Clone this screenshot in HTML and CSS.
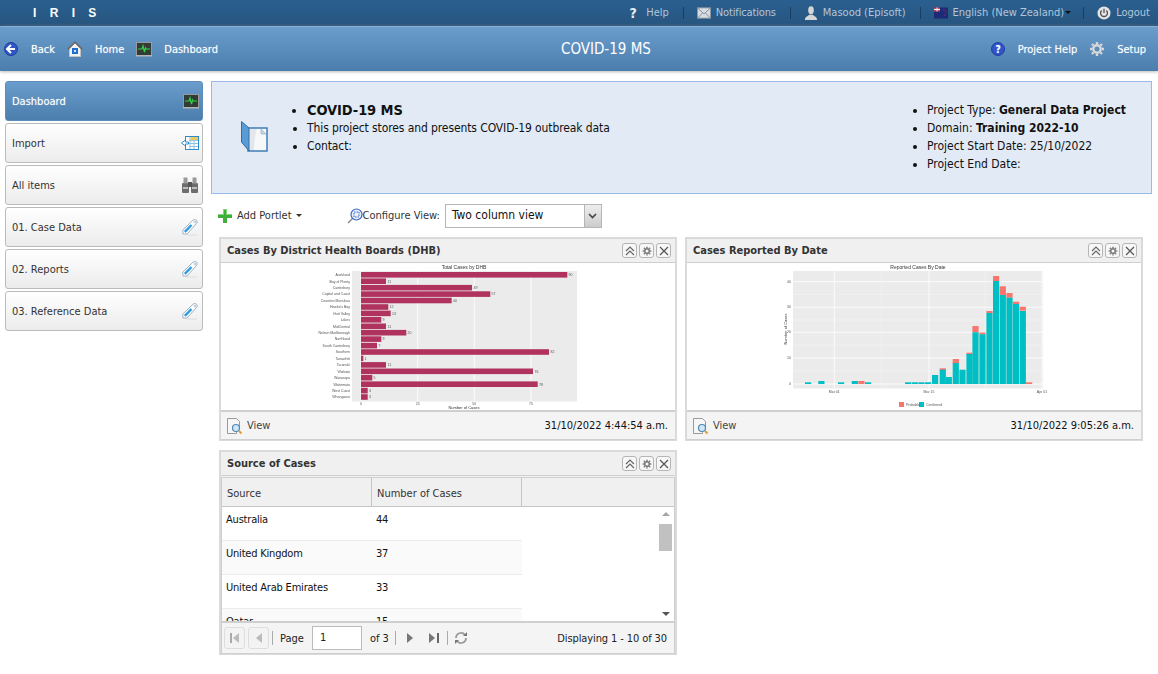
FILE: index.html
```html
<!DOCTYPE html>
<html lang="en">
<head>
<meta charset="UTF-8" />
<title>IRIS - COVID-19 MS</title>
<link rel="stylesheet" href="styles.css">
</head>
<body>

<svg class="sprites" width="0" height="0">
  <symbol id="i-pulse" viewBox="0 0 16 16">
    <rect x="0.5" y="1.5" width="15" height="13" fill="#333b35" stroke="#9a9a9a"/>
    <rect x="0" y="14" width="16" height="1.5" fill="#b5b5b5"/>
    <path d="M2 8h4l1-3 1.500 6 1-4 .5 1h4" fill="none" stroke="#2fd24a" stroke-width="1.200"/>
  </symbol>
  <symbol id="i-tag" viewBox="0 0 18 18">
    <path d="M2 16 1.800 12 12 2.200c1-.9 2.500-.9 3.500 0 .9 1 .9 2.400 0 3.300L6 16z" fill="#fff" stroke="#9fb2c2"/>
    <path d="M3.800 13.800 10.500 7" stroke="#2c9be0" stroke-width="2.400"/>
    <circle cx="14" cy="4" r="1" fill="#fff" stroke="#8fa6b8" stroke-width=".6"/>
    <path d="M6 17h10" stroke="#dcdcdc"/>
  </symbol>
  <symbol id="i-collapse" viewBox="0 0 10 10">
    <path d="M1 5 5 1l4 4M1 9l4-4 4 4" fill="none" stroke="#666" stroke-width="1.200"/>
  </symbol>
  <symbol id="i-gear" viewBox="0 0 16 16">
    <path d="M8 3v-2M8 15v-2M3 8h-2M15 8h-2M4.500 4.500 3 3M13 13l-1.500-1.500M4.500 11.500 3 13M13 3l-1.500 1.500" stroke="currentColor" stroke-width="2.400"/>
    <circle cx="8" cy="8" r="3.700" fill="none" stroke="currentColor" stroke-width="2.400"/>
  </symbol>
  <symbol id="i-close" viewBox="0 0 10 10">
    <path d="M1 1l8 8M9 1 1 9" stroke="#555" stroke-width="1.200"/>
  </symbol>
  <symbol id="i-view" viewBox="0 0 18 18">
    <path d="M1.500 1.500h9l3 3v8h-3v4h-9z" fill="#f6f6f6" stroke="#9a9a9a"/>
    <circle cx="10" cy="11" r="3.500" fill="#cfe6f6" stroke="#4f87b3" stroke-width="1.200"/>
    <path d="M13 14l2.500 2.500" stroke="#e0a030" stroke-width="2"/>
  </symbol>
</svg>

<header class="topbar">
  <div class="logo">I R I S</div>
  <nav class="topmenu">
    <a class="topitem">
      <span class="qmark">?</span>Help
    </a>
    <i class="sep"></i>
    <a class="topitem tight">
      <svg class="ico-tb" viewBox="0 0 15 12"><rect x=".5" y=".5" width="14" height="11" fill="#d9dde2" stroke="#8b98a5"/><path d="M.5.500 7.500 7l7-6.500M.5 11.500 6 6M14.500 11.500 9 6" fill="none" stroke="#7d8a97"/></svg>Notifications
    </a>
    <i class="sep"></i>
    <a class="topitem">
      <svg class="ico-tb" viewBox="0 0 15 15"><ellipse cx="7.500" cy="4.500" rx="3" ry="4.300" fill="#d6d6d6"/><path d="M1 15c0-3.500 3-3.500 4.500-5.500h4C11 11.500 14 11.500 14 15z" fill="#d6d6d6"/></svg>Masood (Episoft)
    </a>
    <i class="sep"></i>
    <a class="topitem">
      <svg class="ico-tb" viewBox="0 0 14 11"><rect width="14" height="11" fill="#1c2a78"/><rect width="6" height="4" fill="#b9495f"/><path d="M3 0v4M0 2h6" stroke="#eee" stroke-width="1"/><path d="M9.500 2h1v1h-1zM11.500 4h1v1h-1zM10.500 7h1v1h-1z" fill="#d33"/></svg>English (New Zealand)<b class="caret caret-dark"></b>
    </a>
    <i class="sep"></i>
    <a class="topitem">
      <svg class="ico-tb" viewBox="0 0 15 15"><circle cx="7.500" cy="7.500" r="7" fill="#e4e4e4"/><path d="M5 4.800a3.700 3.700 0 1 0 5 0" fill="none" stroke="#555" stroke-width="1.400"/><path d="M7.500 3v4.500" stroke="#555" stroke-width="1.400"/></svg>Logout
    </a>
  </nav>
</header>

<div class="navbar">
  <a class="navitem">
    <svg class="ico-back" viewBox="0 0 14 14"><circle cx="7" cy="7" r="6.500" fill="#2f55c8" stroke="#1f3f9e"/><path d="M7 3 3 7l4 4M3.500 7H11" fill="none" stroke="#fff" stroke-width="2"/></svg>Back
  </a>
  <a class="navitem">
    <svg class="ico-home" viewBox="0 0 16 16"><path d="M2.500 7v8.500h11V7L8 2z" fill="#f3f3f3" stroke="#c4c4c4"/><path d="M.7 8.300 8 1.200l7.300 7.100" fill="none" stroke="#6c6c6c" stroke-width="1.800"/><rect x="5" y="7" width="6" height="6" fill="#1f6fd0"/><rect x="7" y="9" width="2" height="2" fill="#cfe6ff"/></svg>Home
  </a>
  <a class="navitem">
    <svg class="ico-home"><use href="#i-pulse"/></svg>Dashboard
  </a>
  <div class="navtitle">COVID-19 MS</div>
  <div class="navright">
    <a class="navitem">
      <svg class="ico-help" viewBox="0 0 14 14"><circle cx="7" cy="7" r="6.500" fill="#2f55c8" stroke="#1f3f9e"/><text x="7" y="10.500" class="ico-q">?</text></svg>Project Help
    </a>
    <a class="navitem">
      <svg class="ico-setup"><use href="#i-gear"/></svg>Setup
    </a>
  </div>
</div>

<div class="page">
  <aside class="sidebar">
    <a class="sideitem active">Dashboard
      <svg class="ico-pulse"><use href="#i-pulse"/></svg>
    </a>
    <a class="sideitem">Import
      <svg class="ico-side" viewBox="0 0 18 18"><rect x="4.500" y="2.500" width="13" height="13" fill="#fff" stroke="#2c8ccb"/><path d="M8 6.500h9M8 9.500h9M8 12.500h9M9 3v12M13 3v12" stroke="#8fc4e6"/><rect x="9.500" y="3" width="7.500" height="3" fill="#f0c860"/><path d="M.5 9l4-3v2h3v2h-3v2z" fill="#fff" stroke="#2c8ccb"/></svg>
    </a>
    <a class="sideitem">All items
      <svg class="ico-side" viewBox="0 0 18 18"><rect x="1" y="7" width="7" height="10" rx="1" fill="#6d6d6d"/><rect x="10" y="7" width="7" height="10" rx="1" fill="#6d6d6d"/><rect x="2.500" y="1.500" width="4" height="6" fill="#9a9a9a"/><rect x="11.500" y="1.500" width="4" height="6" fill="#9a9a9a"/><rect x="7" y="6" width="4" height="5" fill="#555"/><rect x="2" y="11" width="5" height="2" fill="#bdbdbd"/><rect x="11" y="11" width="5" height="2" fill="#bdbdbd"/></svg>
    </a>
    <a class="sideitem">01. Case Data
      <svg class="ico-side"><use href="#i-tag"/></svg>
    </a>
    <a class="sideitem">02. Reports
      <svg class="ico-side"><use href="#i-tag"/></svg>
    </a>
    <a class="sideitem">03. Reference Data
      <svg class="ico-side"><use href="#i-tag"/></svg>
    </a>
  </aside>

  <main class="content">
    <section class="banner">
      <svg class="ico-book" viewBox="0 0 27 31">
        <rect x="7" y="7" width="19" height="23" fill="#f7f8fa" stroke="#3d7db5" stroke-width="1.500"/>
        <path d="M8 29V8h8c-2 6-3 14-3 21z" fill="#e3e6ea"/>
        <path d="M.5.500 8 7v23L.5 21z" fill="#5b9bd5" stroke="#2f6ea5"/>
        <path d="M20 8v5h5z" fill="#cdd6df" stroke="#9fb0bf" stroke-width=".7"/>
      </svg>
      <ul class="info info-main">
        <li class="info-title">COVID-19 MS</li>
        <li>This project stores and presents COVID-19 outbreak data</li>
        <li>Contact:</li>
      </ul>
      <ul class="info info-side">
        <li>Project Type: <b>General Data Project</b></li>
        <li>Domain: <b>Training 2022-10</b></li>
        <li>Project Start Date: 25/10/2022</li>
        <li>Project End Date:</li>
      </ul>
    </section>

    <div class="toolbar">
      <a class="addlink">
        <svg class="ico-plus" viewBox="0 0 14 14"><path d="M5 0h4v5h5v4H9v5H5V9H0V5h5z" fill="#3fae3a"/><path d="M5 0h4v5h5v1H8V1H6v5H0V5h5z" fill="#7fd873"/></svg>Add Portlet<b class="caret"></b>
      </a>
      <svg class="ico-config" viewBox="0 0 16 16"><path d="M1 15l5-5" stroke="#8a8a8a" stroke-width="1.500"/><circle cx="9.500" cy="6.500" r="5.500" fill="#e8f1fb" stroke="#3a62c4" stroke-width="1.200"/><rect x="7" y="4" width="5" height="5" fill="none" stroke="#3a62c4" stroke-dasharray="1.500 1"/></svg>
      <span class="configlabel">Configure View:</span>
      <div class="viewselect">
        <span class="viewvalue">Two column view</span>
        <span class="viewarrow"><svg viewBox="0 0 9 6" width="9" height="6"><path d="M1 1l3.500 3.500L8 1" fill="none" stroke="#444" stroke-width="1.600"/></svg></span>
      </div>
    </div>

    <div class="portlets">
      <section class="portlet">
        <div class="portlet-head">
          <h3>Cases By District Health Boards (DHB)</h3>
          <div class="tools">
            <span class="tool"><svg><use href="#i-collapse"/></svg></span>
            <span class="tool tool-gear"><svg><use href="#i-gear"/></svg></span>
            <span class="tool"><svg><use href="#i-close"/></svg></span>
          </div>
        </div>
        <div class="portlet-body chart-wrap">
          <svg class="chart" width="454" height="148" viewBox="221 263 454 148">
            <rect x="352" y="271" width="225" height="130.500" fill="#ebebeb"/>
            <path d="M361 271v130M417.700 271v130M474.300 271v130M531 271v130" stroke="#fff" stroke-width=".8"/>
            <g fill="#b0325e">
              <rect x="361" y="272" width="206.300" height="5.600"/>
              <rect x="361" y="278.400" width="25" height="5.600"/>
              <rect x="361" y="284.900" width="111" height="5.600"/>
              <rect x="361" y="291.300" width="129.300" height="5.600"/>
              <rect x="361" y="297.700" width="90.700" height="5.600"/>
              <rect x="361" y="304.200" width="27.300" height="5.600"/>
              <rect x="361" y="310.600" width="29.700" height="5.600"/>
              <rect x="361" y="317" width="20.300" height="5.600"/>
              <rect x="361" y="323.500" width="25" height="5.600"/>
              <rect x="361" y="329.900" width="45.300" height="5.600"/>
              <rect x="361" y="336.300" width="20.300" height="5.600"/>
              <rect x="361" y="342.800" width="16" height="5.600"/>
              <rect x="361" y="349.200" width="188" height="5.600"/>
              <rect x="361" y="355.600" width="2.300" height="5.600"/>
              <rect x="361" y="362.100" width="25" height="5.600"/>
              <rect x="361" y="368.500" width="172" height="5.600"/>
              <rect x="361" y="374.900" width="11.300" height="5.600"/>
              <rect x="361" y="381.400" width="176.700" height="5.600"/>
              <rect x="361" y="387.800" width="6.700" height="5.600"/>
              <rect x="361" y="394.200" width="6.700" height="5.600"/>
            </g>
            <g class="axis-y">
              <text x="350" y="276">Auckland</text>
              <text x="350" y="282.500">Bay of Plenty</text>
              <text x="350" y="289">Canterbury</text>
              <text x="350" y="295.400">Capital and Coast</text>
              <text x="350" y="301.800">Counties Manukau</text>
              <text x="350" y="308.300">Hawke's Bay</text>
              <text x="350" y="314.700">Hutt Valley</text>
              <text x="350" y="321.100">Lakes</text>
              <text x="350" y="327.600">MidCentral</text>
              <text x="350" y="334">Nelson Marlborough</text>
              <text x="350" y="340.400">Northland</text>
              <text x="350" y="346.900">South Canterbury</text>
              <text x="350" y="353.300">Southern</text>
              <text x="350" y="359.700">Tairawhiti</text>
              <text x="350" y="366.200">Taranaki</text>
              <text x="350" y="372.600">Waikato</text>
              <text x="350" y="379">Wairarapa</text>
              <text x="350" y="385.500">Waitemata</text>
              <text x="350" y="391.900">West Coast</text>
              <text x="350" y="398.300">Whanganui</text>
            </g>
            <g class="axis-val">
              <text x="568.500" y="276">90</text>
              <text x="387.500" y="282.500">11</text>
              <text x="473.500" y="289">49</text>
              <text x="491.500" y="295.400">57</text>
              <text x="453" y="301.800">40</text>
              <text x="389.500" y="308.300">12</text>
              <text x="392" y="314.700">13</text>
              <text x="382.500" y="321.100">9</text>
              <text x="387.500" y="327.600">11</text>
              <text x="407.500" y="334">20</text>
              <text x="382.500" y="340.400">9</text>
              <text x="378.500" y="346.900">7</text>
              <text x="550.500" y="353.300">82</text>
              <text x="364.500" y="359.700">1</text>
              <text x="387.500" y="366.200">11</text>
              <text x="534.500" y="372.600">76</text>
              <text x="373.500" y="379">5</text>
              <text x="539" y="385.500">78</text>
              <text x="369" y="391.900">3</text>
              <text x="369" y="398.300">3</text>
            </g>
            <g class="axis-x">
              <text x="361" y="405">0</text>
              <text x="417.700" y="405">25</text>
              <text x="474.300" y="405">50</text>
              <text x="531" y="405">75</text>
            </g>
            <text class="chart-title" x="464" y="269">Total Cases by DHB</text>
            <text class="axis-name" x="464" y="409">Number of Cases</text>
          </svg>
        </div>
        <div class="portlet-foot">
          <a class="viewlink"><svg class="ico-view"><use href="#i-view"/></svg>View</a>
          <span class="stamp">31/10/2022 4:44:54 a.m.</span>
        </div>
      </section>

      <section class="portlet">
        <div class="portlet-head">
          <h3>Cases Reported By Date</h3>
          <div class="tools">
            <span class="tool"><svg><use href="#i-collapse"/></svg></span>
            <span class="tool tool-gear"><svg><use href="#i-gear"/></svg></span>
            <span class="tool"><svg><use href="#i-close"/></svg></span>
          </div>
        </div>
        <div class="portlet-body chart-wrap">
          <svg class="chart" width="454" height="148" viewBox="687 263 454 148">
            <rect x="793" y="271" width="250" height="117.500" fill="#ebebeb"/>
            <path d="M793 384h250M793 358h250M793 332.300h250M793 307.300h250M793 281.700h250M834.300 271v117M929 271v117M1042 271v117" stroke="#fff" stroke-width=".8"/>
            <path d="M793 371h250M793 345h250M793 320h250M793 294.500h250M881.700 271v117M985 271v117" stroke="#f5f5f5" stroke-width=".5"/>
            <g fill="#f8766d">
              <rect x="858.300" y="381" width="6.200" height="3"/>
              <rect x="1026" y="382.300" width="6.200" height="1.700"/>
              <rect x="939.700" y="368.300" width="6.200" height="2"/>
              <rect x="952.700" y="359" width="6.200" height="5"/>
              <rect x="966.400" y="352.700" width="6.200" height="1.600"/>
              <rect x="972.400" y="326" width="6.200" height="6.500"/>
              <rect x="979.400" y="332.500" width="6.200" height="2"/>
              <rect x="986.400" y="311" width="6.200" height="2"/>
              <rect x="993" y="276" width="6.200" height="5"/>
              <rect x="999.700" y="286.300" width="6.200" height="8.700"/>
              <rect x="1006.400" y="293" width="6.200" height="4.700"/>
              <rect x="1013" y="301.700" width="6.200" height="2.300"/>
              <rect x="1019.700" y="306.700" width="6.200" height="4"/>
            </g>
            <g fill="#00bfc4">
              <rect x="805" y="382.300" width="6.200" height="1.700"/>
              <rect x="818.300" y="381" width="6.200" height="3"/>
              <rect x="838" y="382.300" width="6.200" height="1.700"/>
              <rect x="851.700" y="381" width="6.200" height="3"/>
              <rect x="865" y="382.300" width="6.200" height="1.700"/>
              <rect x="905" y="382.300" width="6.200" height="1.700"/>
              <rect x="911.700" y="382.300" width="6.200" height="1.700"/>
              <rect x="918.400" y="382.300" width="6.200" height="1.700"/>
              <rect x="925" y="382.300" width="6.200" height="1.700"/>
              <rect x="932" y="375" width="6.200" height="9"/>
              <rect x="939.700" y="369.700" width="6.200" height="14.300"/>
              <rect x="945.700" y="377" width="6.200" height="7"/>
              <rect x="952.700" y="363" width="6.200" height="21"/>
              <rect x="959.400" y="369.700" width="6.200" height="14.300"/>
              <rect x="966.400" y="354" width="6.200" height="30"/>
              <rect x="972.400" y="332.300" width="6.200" height="51.700"/>
              <rect x="979.400" y="334.300" width="6.200" height="49.700"/>
              <rect x="986.400" y="313" width="6.200" height="71"/>
              <rect x="993" y="281" width="6.200" height="103"/>
              <rect x="999.700" y="295" width="6.200" height="89"/>
              <rect x="1006.400" y="297.700" width="6.200" height="86.300"/>
              <rect x="1013" y="304" width="6.200" height="80"/>
              <rect x="1019.700" y="311" width="6.200" height="73"/>
            </g>
            <g class="axis-y">
              <text x="791" y="385">0</text>
              <text x="791" y="359">10</text>
              <text x="791" y="333.300">20</text>
              <text x="791" y="308.300">30</text>
              <text x="791" y="282.700">40</text>
            </g>
            <g class="axis-x">
              <text x="834.300" y="393">Mar 01</text>
              <text x="929" y="393">Mar 15</text>
              <text x="1042" y="393">Apr 01</text>
            </g>
            <text class="chart-title" x="918" y="269">Reported Cases By Date</text>
            <text class="axis-name" transform="translate(787 329) rotate(-90)">Number of Cases</text>
            <rect x="899" y="402" width="5" height="5" fill="#f8766d"/>
            <rect x="919" y="402" width="5" height="5" fill="#00bfc4"/>
            <text class="legend" x="906" y="406">Probable</text>
            <text class="legend" x="926" y="406">Confirmed</text>
          </svg>
        </div>
        <div class="portlet-foot">
          <a class="viewlink"><svg class="ico-view"><use href="#i-view"/></svg>View</a>
          <span class="stamp">31/10/2022 9:05:26 a.m.</span>
        </div>
      </section>

      <section class="portlet portlet-grid">
        <div class="portlet-head">
          <h3>Source of Cases</h3>
          <div class="tools">
            <span class="tool"><svg><use href="#i-collapse"/></svg></span>
            <span class="tool tool-gear"><svg><use href="#i-gear"/></svg></span>
            <span class="tool"><svg><use href="#i-close"/></svg></span>
          </div>
        </div>
        <div class="grid">
          <div class="grid-head">
            <div class="col">Source</div>
            <div class="col">Number of Cases</div>
            <div class="col-fill"></div>
          </div>
          <div class="grid-main">
            <div class="rows">
              <div class="row"><span>Australia</span><span>44</span></div>
              <div class="row alt"><span>United Kingdom</span><span>37</span></div>
              <div class="row"><span>United Arab Emirates</span><span>33</span></div>
              <div class="row alt"><span>Qatar</span><span>15</span></div>
            </div>
            <div class="scroll">
              <b class="scroll-up"></b>
              <div class="scroll-thumb"></div>
              <b class="scroll-down"></b>
            </div>
          </div>
          <div class="pager">
            <span class="pgbtn"><svg viewBox="0 0 10 12" width="10" height="12"><path d="M1 1v10" stroke="#aaa" stroke-width="2"/><path d="M9 1 3 6l6 5z" fill="#bbb"/></svg></span>
            <span class="pgbtn"><svg viewBox="0 0 10 12" width="10" height="12"><path d="M8 1 2 6l6 5z" fill="#bbb"/></svg></span>
            <i class="pgsep pgsep-first"></i>
            <span class="pglabel">Page</span>
            <span class="pginput">1</span>
            <span class="pgof">of 3</span>
            <i class="pgsep"></i>
            <span class="pgicon"><svg viewBox="0 0 10 12" width="10" height="12"><path d="M2 1l6 5-6 5z" fill="#777"/></svg></span>
            <span class="pgicon pgicon-last"><svg viewBox="0 0 12 12" width="12" height="12"><path d="M1 1l6 5-6 5z" fill="#777"/><path d="M10 1v10" stroke="#666" stroke-width="2"/></svg></span>
            <i class="pgsep"></i>
            <svg class="ico-refresh" viewBox="0 0 14 14"><path d="M2 7a5 5 0 0 1 9-3" fill="none" stroke="#999" stroke-width="1.800"/><path d="M12 7a5 5 0 0 1-9 3" fill="none" stroke="#999" stroke-width="1.800"/><path d="M9 5h4V1zM5 9H1v4z" fill="#777"/></svg>
            <span class="pgcount">Displaying 1 - 10 of 30</span>
          </div>
        </div>
      </section>
    </div>
  </main>
</div>

</body>
</html>
```

FILE: styles.css
```css
* {
  box-sizing: border-box;
}
body {
  margin: 0;
  font-family: "DejaVu Sans Condensed", "DejaVu Sans", sans-serif;
  font-size: 11px;
  color: #222;
  background: #fff;
  overflow: hidden;
}
a {
  display: flex;
  align-items: center;
}
.sprites {
  position: absolute;
}

/* top bar */
.topbar {
  height: 26px;
  display: flex;
  align-items: center;
  background: linear-gradient(#2a5f90, #27567f);
  border-bottom: 1px solid #1f4a70;
  color: #b4c6d8;
}
.logo {
  margin-left: 33px;
  color: #fff;
  font-weight: bold;
  font-family: "Liberation Sans", sans-serif;
  font-size: 12px;
  word-spacing: 8px;
  letter-spacing: 1px;
}
.topmenu {
  margin-left: auto;
  margin-right: 8px;
  display: flex;
  align-items: center;
}
.topitem {
  gap: 5px;
}
.tight {
  letter-spacing: -.15px;
}
.qmark {
  width: 12px;
  margin-right: 2px;
  text-align: center;
  font-weight: bold;
  font-size: 14px;
  color: #eee;
}
.ico-tb {
  width: 14px;
  height: 14px;
}
.sep {
  width: 1px;
  height: 12px;
  margin: 0 13px 0 14px;
  background: #173e60;
}
.caret {
  display: inline-block;
  margin-left: -1px;
  border: 3px solid transparent;
  border-top: 3px solid #333;
  border-bottom: 0;
}
.caret-dark {
  margin-left: -4px;
  margin-right: -2px;
  border-top-color: #111;
}

/* nav bar */
.navbar {
  height: 45px;
  display: flex;
  align-items: center;
  padding: 0 12px 0 4px;
  background: linear-gradient(#6b9dcc, #4b7dad);
  border-top: 1px solid #8ab0d4;
  box-shadow: 0 1px 3px #bbb;
  color: #fff;
  text-shadow: 0 0 1px rgba(255, 255, 255, .5);
}
.navitem {
  gap: 12px;
  margin-right: 12px;
}
.ico-back {
  width: 14px;
  height: 14px;
  margin-right: 1px;
}
.ico-home {
  width: 16px;
  height: 16px;
}
.navtitle {
  margin-left: 331px;
  font-size: 15px;
  text-shadow: none;
}
.navright {
  margin-left: auto;
  display: flex;
}
.navright .navitem {
  margin-right: 0;
  margin-left: 12px;
}
.ico-help {
  width: 14px;
  height: 14px;
  margin-right: 1px;
}
.ico-q {
  font-size: 10px;
  font-weight: bold;
  fill: #fff;
  text-anchor: middle;
}
.ico-setup {
  width: 16px;
  height: 16px;
  color: #d8d8d8;
}

/* layout */
.page {
  display: flex;
  padding: 10px 6px 0 5px;
  gap: 8px;
}
.sidebar {
  width: 198px;
  flex: none;
  display: flex;
  flex-direction: column;
  gap: 2px;
}
.sideitem {
  height: 40px;
  justify-content: space-between;
  padding: 0 3px 0 6px;
  border: 1px solid #bbb;
  border-radius: 3px;
  background: linear-gradient(#fff, #ececec);
  color: #333;
}
.sideitem.active {
  background: linear-gradient(#6b9dcc, #4b7dad);
  border-color: #5d8cba;
  color: #fff;
  text-shadow: 0 0 1px rgba(255, 255, 255, .5);
}
.ico-pulse {
  width: 16px;
  height: 16px;
}
.ico-side {
  width: 18px;
  height: 18px;
}
.content {
  flex: 1;
}

/* project banner */
.banner {
  height: 113px;
  position: relative;
  background: #e1eaf5;
  border: 1px solid #99bbe8;
  color: #111;
  font-size: 12px;
}
.ico-book {
  position: absolute;
  left: 29px;
  top: 39px;
  width: 27px;
  height: 31px;
}
.info {
  position: absolute;
  margin: 0;
  padding-left: 16px;
  line-height: 18px;
}
.info-main {
  left: 79px;
  top: 19px;
  letter-spacing: -.1px;
}
.info-title {
  font-size: 14.5px;
  font-weight: bold;
}
.info-side {
  left: 699px;
  top: 19px;
}

/* toolbar */
.toolbar {
  height: 43px;
  display: flex;
  align-items: center;
  padding-left: 7px;
  color: #333;
}
.addlink {
  gap: 5px;
}
.ico-plus {
  width: 14px;
  height: 14px;
}
.ico-config {
  width: 16px;
  height: 16px;
  margin-left: 45px;
}
.viewselect {
  width: 157px;
  height: 24px;
  margin-left: 5px;
  display: flex;
  background: #fff;
  border: 1px solid #b5b5b5;
}
.viewvalue {
  flex: 1;
  padding: 3px 6px;
  font-size: 12px;
  color: #111;
}
.viewarrow {
  width: 17px;
  display: flex;
  align-items: center;
  justify-content: center;
  background: linear-gradient(#eee, #ccc);
  border-left: 1px solid #b5b5b5;
}

/* portlets */
.portlets {
  display: grid;
  grid-template-columns: 458px 458px;
  gap: 9px 8px;
  margin-left: 8px;
}
.portlet {
  height: 204px;
  display: flex;
  flex-direction: column;
  background: #f3f3f3;
  border: 2px solid #dadada;
  border-bottom-width: 1px;
}
.portlet-grid {
  height: 205px;
}
.portlet-head {
  height: 24px;
  flex: none;
  display: flex;
  align-items: center;
  justify-content: space-between;
  padding: 0 4px 0 6px;
  background: #f0f0f0;
  border-bottom: 1px solid #cfcfcf;
}
.portlet-head h3 {
  margin: 0;
  font-size: 11px;
  font-weight: 700;
  color: #333;
}
.tools {
  display: flex;
  gap: 2px;
}
.tool {
  width: 15px;
  height: 15px;
  display: flex;
  align-items: center;
  justify-content: center;
  background: #f7f7f7;
  border: 1px solid #b5b5b5;
  border-radius: 3px;
}
.tool svg {
  width: 10px;
  height: 10px;
}
.tool-gear {
  color: #777;
}
.portlet-body {
  flex: 1;
  background: #fff;
  overflow: hidden;
}
.chart {
  display: block;
  filter: blur(.3px);
}
.chart text {
  font-family: "Liberation Sans", sans-serif;
  font-size: 3.5px;
  fill: #555;
}
.axis-y text {
  text-anchor: end;
}
.axis-x text {
  text-anchor: middle;
}
.chart .chart-title {
  font-size: 5px;
  fill: #333;
  text-anchor: middle;
}
.chart .axis-name {
  font-size: 4px;
  fill: #333;
  text-anchor: middle;
}
.portlet-foot {
  height: 30px;
  flex: none;
  display: flex;
  align-items: center;
  justify-content: space-between;
  padding: 0 7px 0 5px;
  background: #f4f4f4;
  border-top: 2px solid #cfcfcf;
  border-bottom: 1px solid #cfcfcf;
}
.viewlink {
  gap: 3px;
  color: #444;
}
.ico-view {
  width: 18px;
  height: 18px;
}
.stamp {
  color: #111;
}

/* grid */
.grid {
  flex: 1;
  display: flex;
  flex-direction: column;
  min-height: 0;
  margin-top: 1px;
  border: 1px solid #cfcfcf;
  border-bottom: 0;
}
.grid-head {
  height: 29px;
  flex: none;
  display: flex;
  background: #f0f0f0;
  border-bottom: 1px solid #c5c5c5;
  color: #333;
}
.col {
  width: 150px;
  padding: 9px 5px 0;
  border-right: 1px solid #c5c5c5;
}
.col-fill {
  flex: 1;
}
.grid-main {
  flex: 1;
  min-height: 0;
  display: flex;
  background: #fff;
  overflow: hidden;
}
.rows {
  flex: 1;
}
.row {
  width: 300px;
  height: 34px;
  display: flex;
  padding-top: 6px;
  border-bottom: 1px solid #ececec;
  color: #111;
  letter-spacing: -.2px;
}
.row span {
  width: 150px;
  padding-left: 4px;
}
.row.alt {
  background: #fafafa;
}
.scroll {
  width: 17px;
  position: relative;
  background: #fff;
}
.scroll-up,
.scroll-down {
  position: absolute;
  left: 5px;
  border: 4px solid transparent;
}
.scroll-up {
  top: 5px;
  border-top: 0;
  border-bottom: 4px solid #a5a5a5;
}
.scroll-down {
  bottom: 5px;
  border-bottom: 0;
  border-top: 4px solid #555;
}
.scroll-thumb {
  position: absolute;
  top: 17px;
  left: 2px;
  width: 13px;
  height: 27px;
  background: #c1c1c1;
}
.pager {
  height: 33px;
  flex: none;
  display: flex;
  align-items: center;
  padding: 0 7px 0 2px;
  background: #f4f4f4;
  border-top: 2px solid #cfcfcf;
  border-bottom: 1px solid #cfcfcf;
  color: #222;
}
.pgbtn {
  width: 21px;
  height: 22px;
  margin-right: 3px;
  display: flex;
  align-items: center;
  justify-content: center;
  background: #f3f3f3;
  border: 1px solid #ddd;
  border-radius: 3px;
}
.pgsep {
  width: 1px;
  height: 14px;
  margin: 0 6px 0 2px;
  background: #aaa;
}
.pgsep-first {
  margin-left: 0;
}
.pglabel {
  margin-left: 1px;
}
.pginput {
  width: 50px;
  height: 24px;
  margin: 0 8px;
  padding: 4px 7px;
  background: #fff;
  border: 1px solid #bbb;
}
.pgof {
  margin-right: 4px;
}
.pgicon {
  margin-left: 3px;
  display: flex;
}
.pgicon-last {
  margin-left: 13px;
  margin-right: 5px;
}
.ico-refresh {
  width: 14px;
  height: 14px;
}
.pgcount {
  margin-left: auto;
  letter-spacing: -.1px;
}
```
